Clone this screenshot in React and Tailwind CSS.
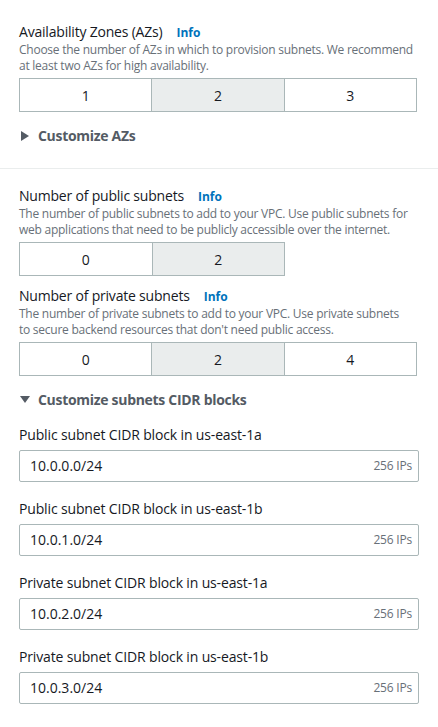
import React from "react";

const font = { fontFamily: '"Open Sans", "Noto Sans", Arial, sans-serif' };

function Info() {
  return <span className="ml-[14px] text-[12px] font-bold leading-none tracking-normal text-[#0073bb]">Info</span>;
}

function Segmented({ options, selected, width }) {
  return (
    <div className={`flex h-[34px] border border-[#aab7b8] ${width}`}>
      {options.map((o, i) => (
        <div
          key={i}
          className={`flex flex-1 items-center justify-center text-[14px] text-[#16191f] ${i > 0 ? "border-l border-[#aab7b8]" : ""} ${o === selected ? "bg-[#eaeded]" : "bg-white"}`}
        >
          {o}
        </div>
      ))}
    </div>
  );
}

function Field({ label, value, mt }) {
  return (
    <div className={mt}>
      <div className="text-[14px] leading-[20px] tracking-[-0.15px] text-[#16191f]">{label}</div>
      <div className="mt-[5px] flex h-[32px] w-[400px] items-center justify-between rounded-[2px] border border-[#aab7b8] pl-[10px] pr-[6px]">
        <span className="text-[14px] leading-[20px] text-[#16191f]">{value}</span>
        <span className="text-[12px] leading-[16px] tracking-[-0.2px] text-[#687078]">256 IPs</span>
      </div>
    </div>
  );
}

function Title({ children, mt = "" }) {
  return (
    <div className={`${mt} text-[14px] leading-[20px] tracking-[-0.2px] text-[#16191f]`}>
      {children}
      <Info />
    </div>
  );
}

function Desc({ l1, l2 }) {
  return (
    <div className="w-[420px] whitespace-nowrap text-[12px] leading-[16px] tracking-[-0.25px] text-[#687078]">
      {l1}
      <br />
      {l2}
    </div>
  );
}

export default function App() {
  return (
    <div className="min-h-[727px] w-[438px] bg-white" style={font}>
      <div className="px-[19px] pt-[22px]">
        <Title>Availability Zones (AZs)</Title>
        <Desc
          l1="Choose the number of AZs in which to provision subnets. We recommend"
          l2="at least two AZs for high availability."
        />
        <div className="mt-[4px]">
          <Segmented options={["1", "2", "3"]} selected="2" width="w-[398px]" />
        </div>
        <div className="mt-[14px] flex h-[20px] items-center text-[14px] font-bold leading-[20px] tracking-[-0.3px] text-[#545b64]">
          <svg width="9" height="10" viewBox="0 0 9 10" className="ml-[2px] mr-[8px]">
            <path d="M0 0 L8 5 L0 10 Z" fill="#545b64" />
          </svg>
          Customize AZs
        </div>
      </div>
      <div className="mt-[22px] h-px w-full bg-[#eaeded]" />
      <div className="px-[19px] pt-[17px]">
        <Title>Number of public subnets</Title>
        <Desc
          l1="The number of public subnets to add to your VPC. Use public subnets for"
          l2="web applications that need to be publicly accessible over the internet."
        />
        <div className="mt-[4px]">
          <Segmented options={["0", "2"]} selected="2" width="w-[266px]" />
        </div>
        <Title mt="mt-[10px]">Number of private subnets</Title>
        <Desc
          l1="The number of private subnets to add to your VPC. Use private subnets"
          l2="to secure backend resources that don't need public access."
        />
        <div className="mt-[4px]">
          <Segmented options={["0", "2", "4"]} selected="2" width="w-[398px]" />
        </div>
        <div className="mt-[14px] flex h-[20px] items-center text-[14px] font-bold leading-[20px] tracking-[-0.3px] text-[#545b64]">
          <svg width="10" height="8" viewBox="0 0 10 8" className="ml-[1px] mr-[8px]">
            <path d="M0 0 L10 0 L5 7 Z" fill="#545b64" />
          </svg>
          Customize subnets CIDR blocks
        </div>
        <Field mt="mt-[15px]" label="Public subnet CIDR block in us-east-1a" value="10.0.0.0/24" />
        <Field mt="mt-[17px]" label="Public subnet CIDR block in us-east-1b" value="10.0.1.0/24" />
        <Field mt="mt-[17px]" label="Private subnet CIDR block in us-east-1a" value="10.0.2.0/24" />
        <Field mt="mt-[17px]" label="Private subnet CIDR block in us-east-1b" value="10.0.3.0/24" />
      </div>
    </div>
  );
}
